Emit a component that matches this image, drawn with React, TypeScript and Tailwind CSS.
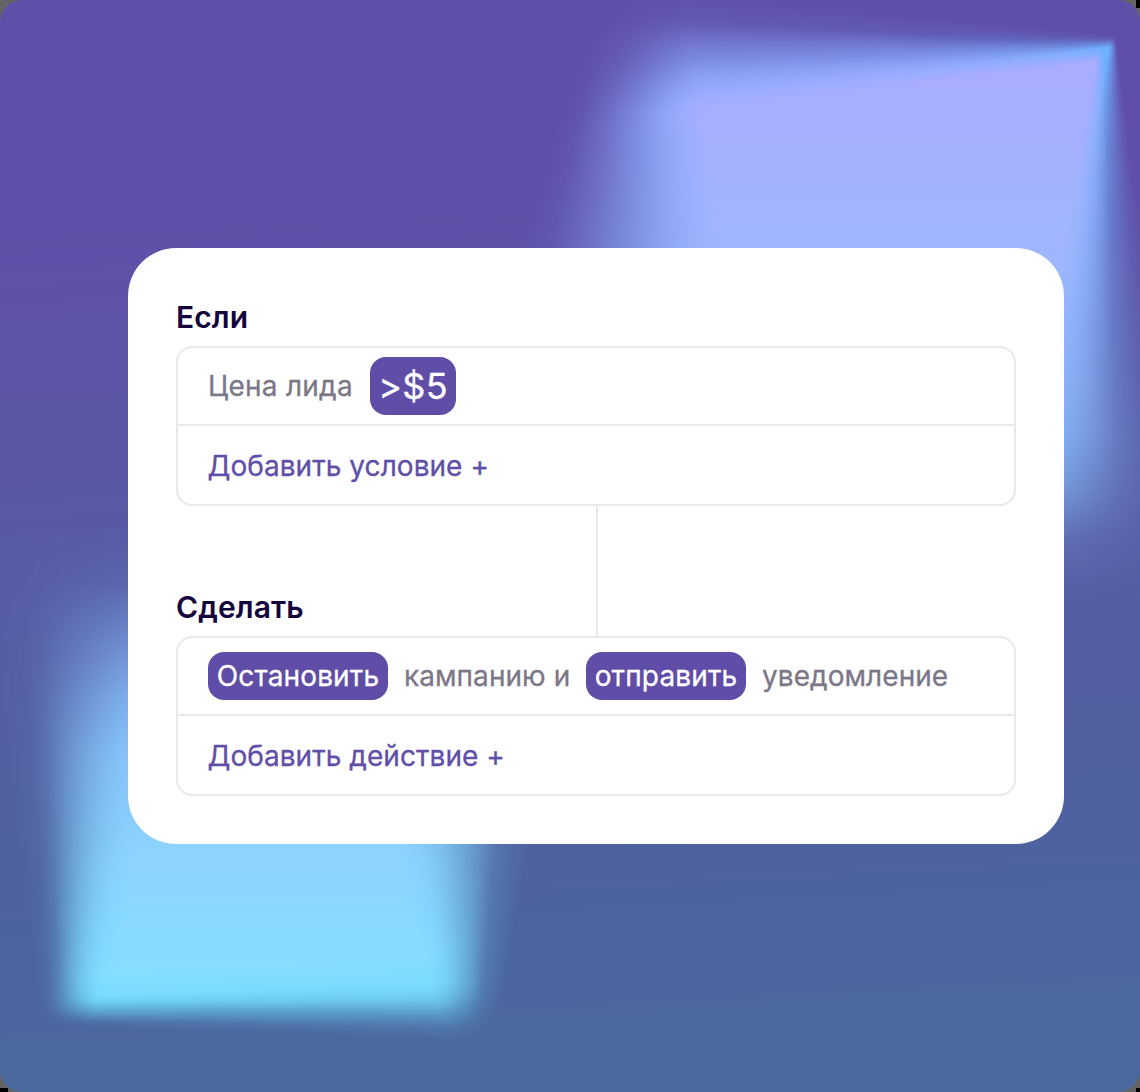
import type { ReactNode } from "react";

function Chip({ children, className }: { children: ReactNode; className: string }) {
  return (
    <span
      className={`flex shrink-0 items-center justify-center whitespace-nowrap rounded-2xl bg-[#5f4da8] text-white ${className}`}
    >
      {children}
    </span>
  );
}

function RuleBox({ children, action }: { children: ReactNode; action: string }) {
  return (
    <div className="flex h-40 flex-col rounded-2xl border-2 border-[#e9e9e9] text-[28px] leading-10 tracking-[0.05px] [-webkit-text-stroke:0.3px_currentColor]">
      <div className="flex h-[78px] items-center gap-4 whitespace-nowrap border-b-2 border-[#e9e9e9] pl-[30px] text-[#7c7787]">
        {children}
      </div>
      <button className="flex flex-1 items-center pl-[29.5px] pt-0.5 text-left text-[#5f4fa6]">{action}</button>
    </div>
  );
}

function Glows() {
  return (
    <div className="pointer-events-none absolute inset-0">
      <div className="absolute inset-0 bg-linear-to-b from-[#6fb0ff] from-5% to-[#7fb0ee] to-50% [mask-composite:intersect] [mask-image:conic-gradient(from_90deg_at_1160px_40px,#000_172deg,#000c_174deg,#0007_177.5deg,#0002_181.5deg,transparent_186deg),conic-gradient(at_1114px_20px,transparent_173deg,#0002_176deg,#0007_181deg,#000c_186deg,#000_190deg),conic-gradient(at_650px_-200px,#000_169deg,#000d_173deg,#0008_180deg,#0003_187deg,transparent_196deg),linear-gradient(to_bottom,#000_440px,#000b_490px,#0004_540px,transparent_600px)]" />
      <div className="absolute inset-0 bg-linear-to-b from-[#a9abff] from-5% via-[#a0b6ff] via-24% to-[#84b2f5] to-46% [mask-composite:intersect] [mask-image:conic-gradient(from_90deg_at_1175px_52px,#000_173deg,#000b_175.5deg,#0005_179deg,transparent_184deg),conic-gradient(at_1103px_20px,transparent_178deg,#0004_181deg,#000b_186deg,#000_190deg),conic-gradient(at_652px_-200px,#000_171deg,#000c_175deg,#0006_182deg,transparent_193deg),linear-gradient(to_bottom,#000_400px,transparent_540px)]" />
      <div className="absolute inset-0 bg-linear-to-b from-[#7fb4ef] from-60% to-[#6cdcfb] to-93% [mask-composite:intersect] [mask-image:conic-gradient(from_180deg_at_62px_1180px,transparent_172.5deg,#0001_176deg,#0006_181deg,#000b_186deg,#000_191deg),conic-gradient(from_180deg_at_472px_1150px,#000_167deg,#000d_171deg,#0008_178deg,#0003_184deg,transparent_191deg),conic-gradient(from_270deg_at_-300px_1013px,#000_177.6deg,#000c_178.8deg,#0007_180deg,#0002_181.1deg,transparent_182.1deg),linear-gradient(to_bottom,transparent_520px,#0002_580px,#0007_640px,#000c_695px,#000_760px)]" />
      <div className="absolute inset-0 bg-linear-to-b from-[#8cbfff] from-62% via-[#8cd5ff] via-80% to-[#84dfff] to-92% [mask-composite:intersect] [mask-image:conic-gradient(from_180deg_at_72px_1180px,transparent_176.5deg,#0004_180.5deg,#000a_186deg,#000_191.5deg),conic-gradient(from_180deg_at_466px_1150px,#000_167deg,#000b_172deg,#0005_178deg,transparent_186deg),conic-gradient(from_270deg_at_-300px_1000px,#000_176.5deg,#000a_178.6deg,transparent_181deg),linear-gradient(to_bottom,transparent_580px,#0007_660px,#000_750px)]" />
    </div>
  );
}

export default function App() {
  return (
    <main className="relative h-[1092px] w-[1140px] overflow-hidden bg-[#646464] font-['Inter',sans-serif]">
      <div className="absolute right-0 top-0 h-2 w-1 bg-black" />
      <div className="absolute bottom-0 left-0 h-1 w-2 bg-black" />
      <div className="absolute bottom-0 right-0 size-1 bg-black" />
      <div className="relative h-full overflow-hidden rounded-[22px] bg-[linear-gradient(177deg,#604fa9_18%,#575ca5_52%,#4e629f_78%,#4a6a9f_96%)] pl-32 pt-[248px]">
        <Glows />
        <section className="relative flex h-[596px] w-[936px] flex-col rounded-[48px] bg-white px-12 pt-[49px]">
          <h2 className="h-[49px] text-[30px] font-semibold leading-10 tracking-[0.1px] text-[#14053c]">Если</h2>
          <RuleBox action="Добавить условие +">
            <span className="w-[146px] tracking-[0.25px]">Цена лида</span>
            <Chip className="h-[58px] w-[86px] text-[36px] tracking-[0.3px]">{">$5"}</Chip>
          </RuleBox>
          <div className="flex h-[130px] items-end">
            <h2 className="h-[49px] w-[420px] text-[30px] font-semibold leading-10 tracking-[0.1px] text-[#14053c]">
              Сделать
            </h2>
            <div className="h-full w-0.5 bg-[#e9e9e9]" />
          </div>
          <RuleBox action="Добавить действие +">
            <Chip className="h-12 w-[180px] tracking-[0.15px]">Остановить</Chip>
            <span className="w-[166px]">кампанию и</span>
            <Chip className="h-12 w-40 tracking-[0.15px]">отправить</Chip>
            <span>уведомление</span>
          </RuleBox>
        </section>
      </div>
    </main>
  );
}
